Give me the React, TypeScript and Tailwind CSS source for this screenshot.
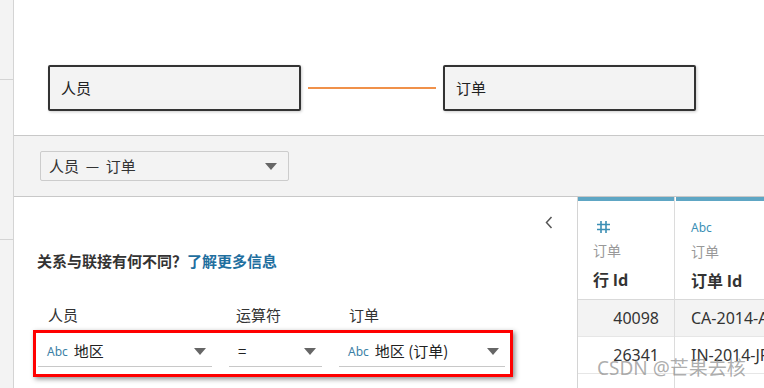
import React from "react";

const cjk = { fontFamily: '"Noto Sans CJK SC", "Noto Sans", sans-serif' };
const latin = { fontFamily: '"Noto Sans", "Noto Sans CJK SC", sans-serif' };

function Caret() {
  return (
    <svg width="12" height="7" viewBox="0 0 12 7" className="shrink-0">
      <path d="M0 0 L12 0 L6 7 Z" fill="#666" />
    </svg>
  );
}

function Node({ label }: { label: string }) {
  return (
    <div className="w-[253px] h-[46px] bg-[#f3f3f3] border-2 border-[#333] rounded-[2px] shadow-[1px_1px_3px_rgba(0,0,0,0.2)] flex items-center pl-[11px] text-[15px] text-[#222]">
      {label}
    </div>
  );
}

function Field({ abc, text, width }: { abc?: boolean; text: string; width: string }) {
  return (
    <div className={`${width} h-[31px] border-b border-[#c8c8c8] flex items-center pl-[9px] pr-[6px]`}>
      {abc && <span className="text-[12px] text-[#3c7fa6] mr-[6px] mt-[2px]" style={latin}>Abc</span>}
      <span className="text-[15px] text-[#222] flex-1">{text}</span>
      <Caret />
    </div>
  );
}

export default function App() {
  return (
    <div className="w-[764px] h-[388px] flex overflow-hidden bg-white relative" style={cjk}>
      {/* left rail */}
      <div className="w-[14px] shrink-0 bg-[#f3f3f3] border-r border-[#d4d4d4] flex flex-col">
        <div className="h-[80px] border-b border-[#d4d4d4]" />
        <div className="h-[160px] border-b border-[#d4d4d4]" />
      </div>

      <div className="flex-1 flex flex-col">
        {/* canvas */}
        <div className="h-[136px] shrink-0 border-b border-[#c8c8c8] pt-[65px] pl-[34px] flex items-start">
          <Node label="人员" />
          <div className="w-[128px] h-[2px] bg-[#f0914a] mx-[7px] mt-[22px]" />
          <Node label="订单" />
        </div>

        {/* relation picker band */}
        <div className="h-[61px] shrink-0 bg-[#f3f3f3] border-b border-[#c8c8c8] pt-[15px] pl-[26px]">
          <div className="w-[249px] h-[30px] border border-[#cccccc] rounded-[2px] flex items-center pl-[8px] pr-[11px] text-[15px] text-[#333]">
            <span className="flex-1 whitespace-pre">人员  —  订单</span>
            <Caret />
          </div>
        </div>

        {/* lower area */}
        <div className="flex-1 flex min-h-0">
          {/* left panel */}
          <div className="w-[563px] shrink-0 flex flex-col">
            <div className="flex justify-end pr-[24px] pt-[19px] h-[34px]">
              <svg width="8" height="13" viewBox="0 0 8 13">
                <path d="M6.5 1 L1.5 6.5 L6.5 12" fill="none" stroke="#555" strokeWidth="1.5" />
              </svg>
            </div>
            <div className="pl-[23px] mt-[19px] text-[15px] leading-[22px] font-bold text-[#333]">
              关系与联接有何不同？<span className="text-[#1f6f9f]">了解更多信息</span>
            </div>
            <div className="flex pl-[34px] mt-[33px] text-[15px] text-[#333] leading-[20px]">
              <span className="w-[188px]">人员</span>
              <span className="w-[113px]">运算符</span>
              <span>订单</span>
            </div>
            <div className="ml-[19px] mt-[5px] w-[480px] h-[47px] border-[3px] border-[#ff0000] shadow-[2px_2px_5px_rgba(0,0,0,0.45)] flex pl-[2px] pt-[3px] gap-[17px]">
              <Field abc text="地区" width="w-[174px]" />
              <Field text="=" width="w-[93px]" />
              <Field abc text="地区 (订单)" width="w-[166px]" />
            </div>
          </div>

          {/* data grid */}
          <div className="flex-1 border-l border-[#d4d4d4] flex">
            <div className="w-[97px] shrink-0 border-r border-[#dcdcdc] flex flex-col">
              <div className="h-[4px] bg-[#5ea6c4]" />
              <div className="h-[99px] border-b border-[#d9d9d9] pl-[15px] pt-[20px]">
                <svg width="13" height="12" viewBox="0 0 13 12" className="ml-[4px]">
                  <path d="M4 0 V12 M9 0 V12 M0 3.5 H13 M0 8.5 H13" stroke="#3c8fb5" strokeWidth="1.6" fill="none" />
                </svg>
                <div className="text-[14px] leading-[18px] text-[#999] mt-[8px]">订单</div>
                <div className="text-[16px] leading-[20px] font-bold text-[#333] mt-[10px]">行 Id</div>
              </div>
              <div className="h-[37px] bg-[#f3f3f3] border-b border-[#e6e6e6] flex items-center justify-end pr-[15px] text-[16px] text-[#333]" style={latin}>40098</div>
              <div className="h-[37px] border-b border-[#e6e6e6] flex items-center justify-end pr-[15px] text-[16px] text-[#333]" style={latin}>26341</div>
            </div>
            <div className="flex-1 flex flex-col overflow-hidden">
              <div className="h-[4px] bg-[#5ea6c4] ml-[1px]" />
              <div className="h-[99px] border-b border-[#d9d9d9] pl-[16px] pt-[19px]">
                <div className="text-[12px] leading-[16px] text-[#3c8fb5]" style={latin}>Abc</div>
                <div className="text-[14px] leading-[18px] text-[#999] mt-[6px]">订单</div>
                <div className="text-[16px] leading-[20px] font-bold text-[#333] mt-[10px] whitespace-nowrap">订单 Id</div>
              </div>
              <div className="h-[37px] bg-[#f3f3f3] border-b border-[#e6e6e6] flex items-center pl-[16px] text-[16px] text-[#333] whitespace-nowrap" style={latin}>CA-2014-AB10015140-41954</div>
              <div className="h-[37px] border-b border-[#e6e6e6] flex items-center pl-[16px] text-[16px] text-[#333] whitespace-nowrap" style={latin}>IN-2014-JR162107-41675</div>
            </div>
          </div>
        </div>
      </div>

      {/* watermark */}
      <div className="absolute left-[597px] top-[357px] text-[19px] leading-[22px] text-[#8a8a8a]/70 whitespace-nowrap" style={latin}>
        CSDN @芒果去核
      </div>
    </div>
  );
}
